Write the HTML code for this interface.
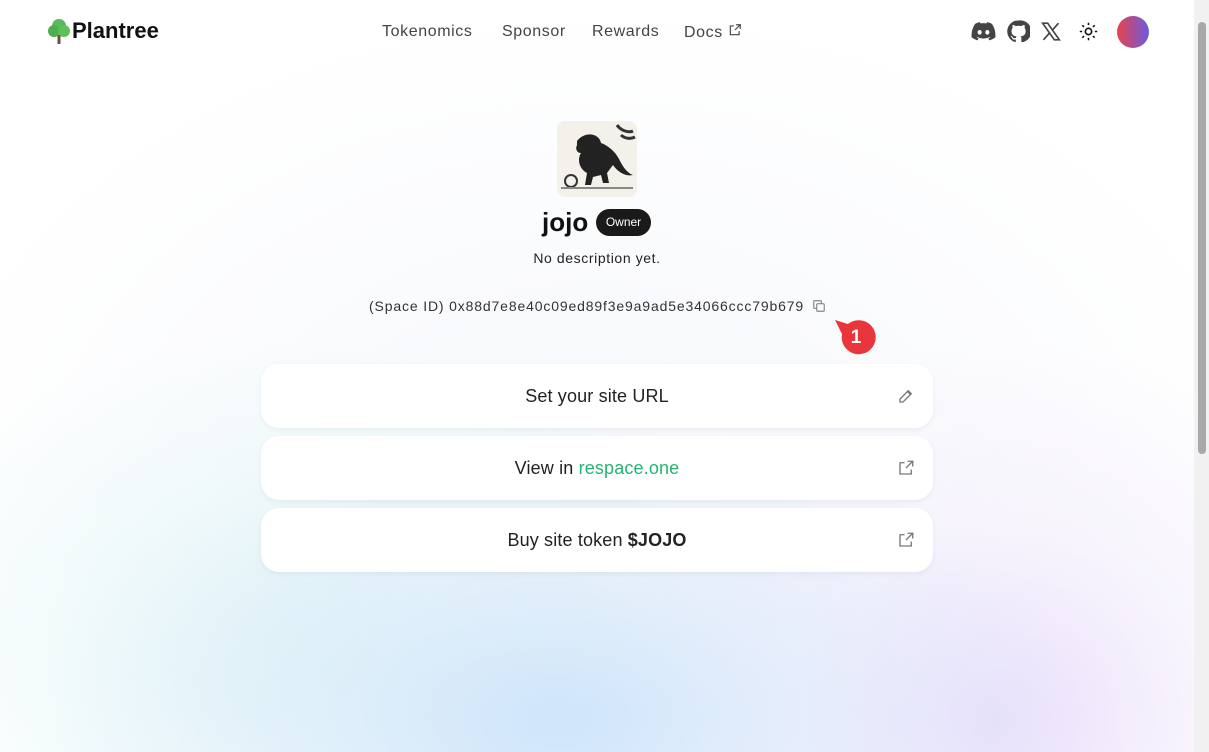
<!DOCTYPE html>
<html><head><meta charset="utf-8"><style>
*{box-sizing:border-box;margin:0;padding:0}
body{width:1209px;height:752px;overflow:hidden;font-family:"Liberation Sans",sans-serif;color:#222;position:relative;
background:
radial-gradient(ellipse 520px 300px at 560px 720px,#cfe5fb 0%,rgba(215,232,250,.55) 45%,rgba(255,255,255,0) 100%),
radial-gradient(ellipse 420px 380px at 1000px 720px,rgba(230,218,250,.85) 0%,rgba(242,234,252,.45) 50%,rgba(255,255,255,0) 100%),
radial-gradient(ellipse 450px 320px at 300px 650px,rgba(220,245,245,.7) 0%,rgba(255,255,255,0) 100%),
radial-gradient(ellipse 700px 500px at 600px 500px,#f5f7fb 0%,#fff 100%);}
.nav{position:absolute;top:0;left:0;width:1194px;height:62px}
.logo{position:absolute;left:48px;top:18px;display:flex;align-items:center;font-weight:bold;font-size:22px;color:#111}
.links span{position:absolute;top:23px;font-size:16px;color:#444;letter-spacing:.6px}
.card{position:absolute;left:261px;width:672px;height:64px;background:#fff;border-radius:18px;box-shadow:0 2px 6px rgba(0,0,0,.05);text-align:center;font-size:18px;line-height:64px;color:#222;letter-spacing:.15px}
.card svg{position:absolute;right:18px;top:23px}
.sb{position:absolute;right:0;top:0;width:15px;height:752px;background:#f1f1f1}
.sb div{position:absolute;left:4px;top:22px;width:8px;height:432px;background:#a8a8a8;border-radius:4px}
</style></head><body>
<div class="nav">
<div class="logo"><svg width="22" height="26" viewBox="0 0 22 26"><circle cx="11" cy="8" r="7" fill="#5cb85c"/><circle cx="6" cy="13" r="6" fill="#4caf50"/><circle cx="16" cy="13" r="6" fill="#5fbf5a"/><rect x="9.5" y="17" width="3" height="9" fill="#6d4c41"/></svg><span style="margin-left:2px">Plantree</span></div>
<div class="links"><span style="left:382px">Tokenomics</span><span style="left:502px">Sponsor</span><span style="left:592px">Rewards</span><span style="left:684px">Docs <svg width="14" height="14" viewBox="0 0 24 24" fill="none" stroke="#444" stroke-width="2"><path d="M14 3h7v7M21 3l-9 9M19 14v6H4V5h6"/></svg></span></div>
<svg style="position:absolute;left:971px;top:22px" width="25" height="19" viewBox="0 0 24 18"><path fill="#444" d="M20 1.5A19 19 0 0 0 15.5 0l-.6 1.2a17 17 0 0 0-5.8 0L8.5 0A19 19 0 0 0 4 1.5C1 6 .3 10.3.6 14.6A19 19 0 0 0 6.2 17.5l1.2-1.9-1.9-.9.5-.4a13 13 0 0 0 12 0l.5.4-1.9.9 1.2 1.9a19 19 0 0 0 5.6-2.9c.4-5-.8-9.3-3.4-13.1zM8.3 12c-1.1 0-2-1-2-2.3s.9-2.2 2-2.2 2 1 2 2.2-.9 2.3-2 2.3zm7.4 0c-1.1 0-2-1-2-2.3s.9-2.2 2-2.2 2 1 2 2.2-.9 2.3-2 2.3z"/></svg>
<svg style="position:absolute;left:1007px;top:20px" width="23" height="23" viewBox="0 0 24 24"><path fill="#444" d="M12 .5A11.5 11.5 0 0 0 8.4 23c.6.1.8-.3.8-.6v-2c-3.2.7-3.9-1.5-3.9-1.5-.5-1.3-1.3-1.7-1.3-1.7-1-.7.1-.7.1-.7 1.2.1 1.8 1.2 1.8 1.2 1 1.8 2.7 1.3 3.4 1 .1-.8.4-1.3.7-1.6-2.6-.3-5.3-1.3-5.3-5.7 0-1.3.5-2.3 1.2-3.1-.1-.3-.5-1.5.1-3.1 0 0 1-.3 3.2 1.2a11 11 0 0 1 5.8 0c2.2-1.5 3.2-1.2 3.2-1.2.6 1.6.2 2.8.1 3.1.7.8 1.2 1.8 1.2 3.1 0 4.4-2.7 5.4-5.3 5.7.4.4.8 1.1.8 2.2v3.3c0 .3.2.7.8.6A11.5 11.5 0 0 0 12 .5z"/></svg>
<svg style="position:absolute;left:1041px;top:22px" width="20" height="19" viewBox="0 0 24 22"><path fill="none" stroke="#444" stroke-width="2" d="M2 1h6l14 20h-6zM21 1l-8 9M3 21l8-9"/></svg>
<svg style="position:absolute;left:1079px;top:22px" width="19" height="19" viewBox="0 0 24 24" fill="none" stroke="#111" stroke-width="2"><circle cx="12" cy="12" r="4"/><path d="M12 1v3M12 20v3M1 12h3M20 12h3M4.2 4.2l2.1 2.1M17.7 17.7l2.1 2.1M4.2 19.8l2.1-2.1M17.7 6.3l2.1-2.1"/></svg>
<div style="position:absolute;left:1117px;top:16px;width:32px;height:32px;border-radius:50%;background:linear-gradient(90deg,#e8434a,#6a5be0)"></div>
</div>
<svg style="position:absolute;left:557px;top:121px" width="80" height="76" viewBox="0 0 80 76"><rect width="80" height="76" rx="8" fill="#f4f1ea"/><path d="M20 20c8-10 22-8 24 2 6 2 14 8 18 16 4 8 8 14 14 16-8 2-16-4-20-10l-6 8 2 10h-6l-2-8-8 2-2 8h-6l2-12c-8-4-10-14-6-20-4 0-6-4-4-8z" fill="#222"/><path d="M60 4c4 6 12 8 16 6M64 14c4 4 10 4 14 2" stroke="#333" stroke-width="3" fill="none"/><circle cx="14" cy="60" r="6" fill="none" stroke="#333" stroke-width="2"/><rect x="4" y="66" width="72" height="2" fill="#888"/></svg>
<div style="position:absolute;left:542px;top:207px;font-size:26px;font-weight:bold;color:#111">jojo</div>
<div style="position:absolute;left:596px;top:209px;width:55px;height:27px;border-radius:14px;background:#1a1a1a;color:#fff;font-size:12px;line-height:27px;text-align:center">Owner</div>
<div style="position:absolute;left:0;width:1194px;top:250px;text-align:center;font-size:14px;color:#222;letter-spacing:.6px">No description yet.</div>
<div style="position:absolute;left:369px;top:298px;font-size:14px;color:#333;letter-spacing:.85px">(Space ID) 0x88d7e8e40c09ed89f3e9a9ad5e34066ccc79b679</div>
<svg style="position:absolute;left:812px;top:299px" width="14" height="14" viewBox="0 0 24 24" fill="none" stroke="#888" stroke-width="2"><rect x="8" y="8" width="13" height="13" rx="2"/><path d="M16 8V4a1 1 0 0 0-1-1H4a1 1 0 0 0-1 1v11a1 1 0 0 0 1 1h4"/></svg>
<svg style="position:absolute;left:834px;top:318px" width="42" height="38" viewBox="0 0 42 38"><path d="M1 2L14 6A17 17 0 1 1 8 16Z" fill="#e8363c"/><text x="22" y="25" font-family="Liberation Sans" font-weight="bold" font-size="19" fill="#fff" text-anchor="middle">1</text></svg>
<div class="card" style="top:364px">Set your site URL<svg width="18" height="18" viewBox="0 0 24 24" fill="none" stroke="#777" stroke-width="1.8"><path d="M4 20h4L19 9l-4-4L4 16zM14 6l4 4"/></svg></div>
<div class="card" style="top:436px">View in <span style="color:#22b573">respace.one</span><svg width="18" height="18" viewBox="0 0 24 24" fill="none" stroke="#777" stroke-width="1.8"><path d="M14 3h7v7M21 3l-9 9M19 14v6H4V5h6"/></svg></div>
<div class="card" style="top:508px">Buy site token <b>$JOJO</b><svg width="18" height="18" viewBox="0 0 24 24" fill="none" stroke="#777" stroke-width="1.8"><path d="M14 3h7v7M21 3l-9 9M19 14v6H4V5h6"/></svg></div>
<div class="sb"><div></div></div>
</body></html>
